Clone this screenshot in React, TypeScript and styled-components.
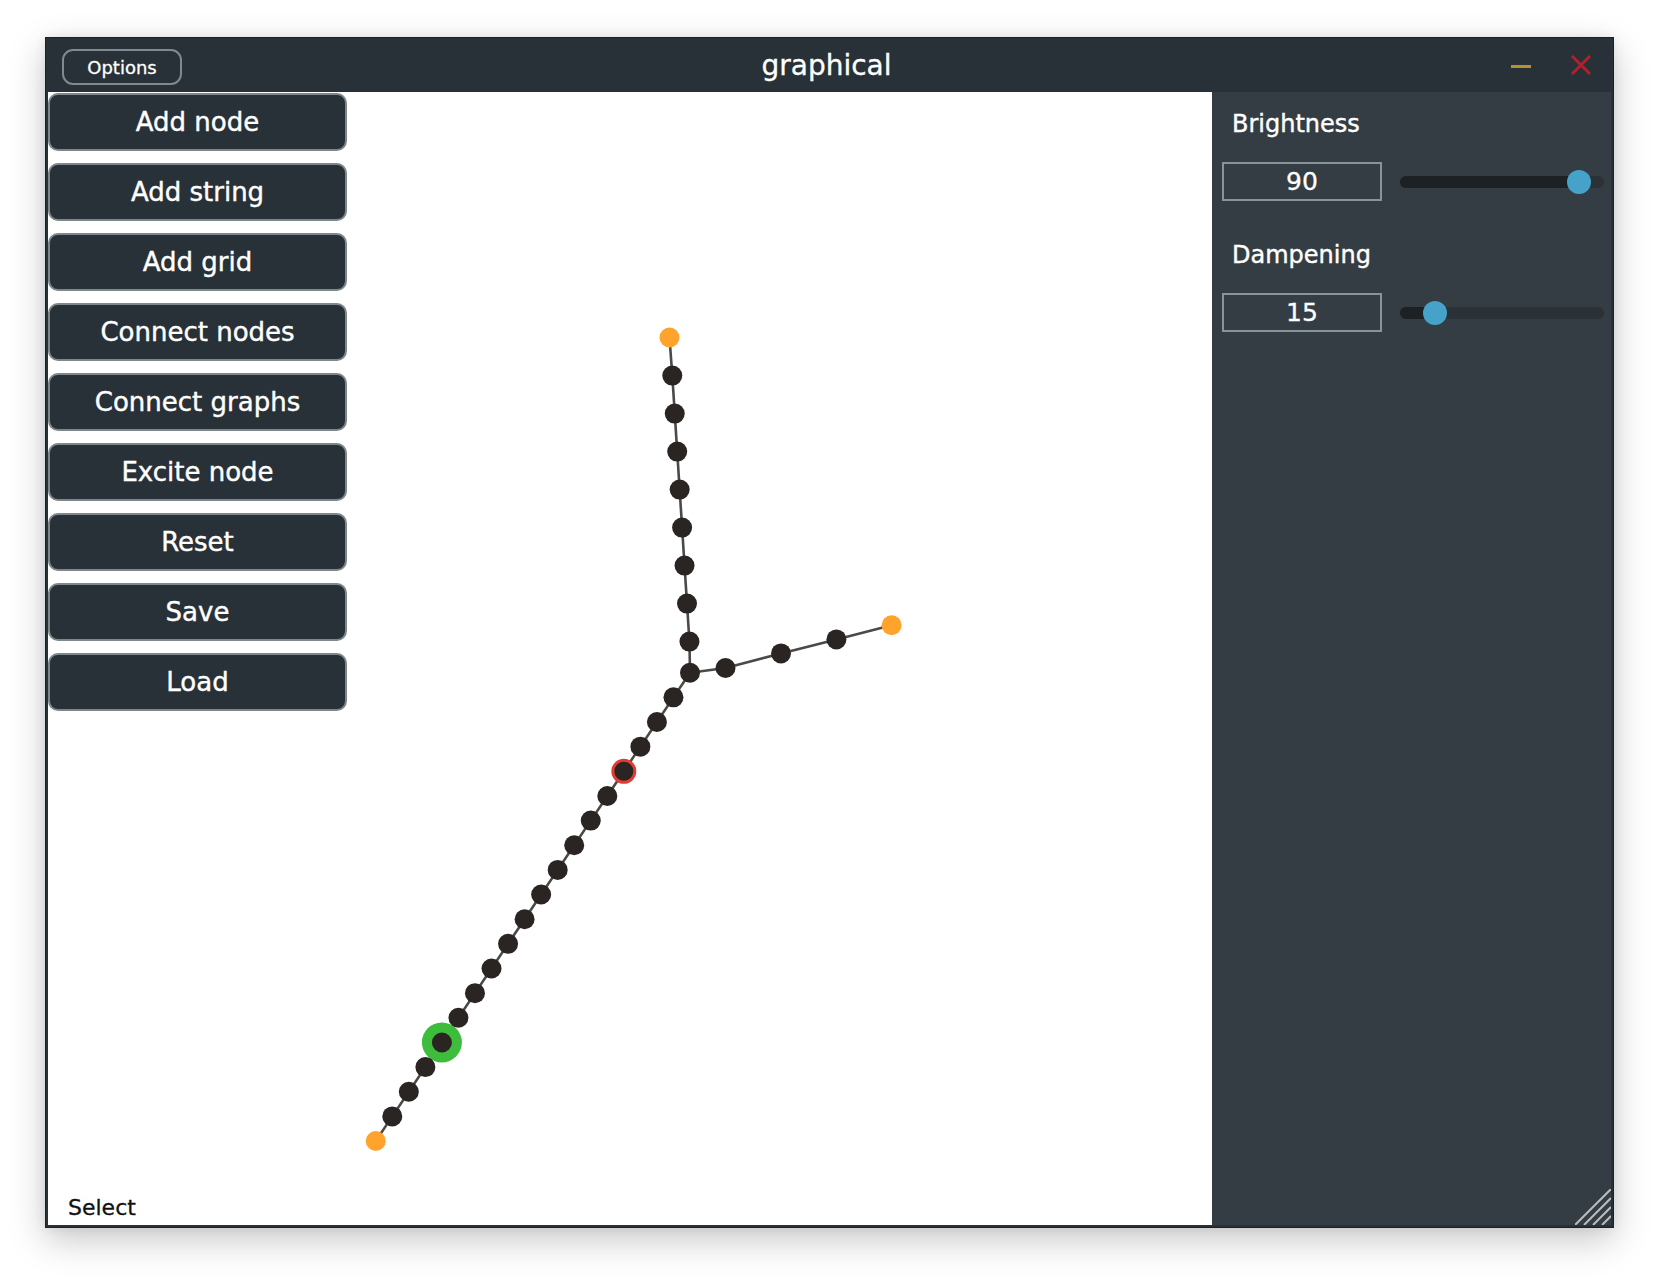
import styled, { createGlobalStyle } from 'styled-components';

const GlobalStyle = createGlobalStyle`
  html, body {
    margin: 0;
    padding: 0;
    background: #ffffff;
    font-family: 'DejaVu Sans', 'Liberation Sans', sans-serif;
  }
`;

const Page = styled.div`
  width: 1660px;
  height: 1282px;
  padding: 37px 0 0 45px;
  box-sizing: border-box;
`;

const Window = styled.div`
  width: 1569px;
  height: 1191px;
  box-sizing: border-box;
  display: flex;
  flex-direction: column;
  background: #283137;
  border: 1px solid #1b2125;
  padding: 0 2px 2px 2px;
  box-shadow: 0 12px 34px rgba(0, 0, 0, 0.22), 0 0 10px rgba(0, 0, 0, 0.08);
`;

const TitleBar = styled.div`
  height: 54px;
  flex: none;
  display: grid;
  grid-template-columns: 1fr auto 1fr;
  align-items: center;
  padding: 0 20px 0 14px;
`;

const OptionsButton = styled.button`
  justify-self: start;
  width: 120px;
  height: 36px;
  margin-top: 4px;
  border: 2px solid #7f898e;
  border-radius: 11px;
  background: transparent;
  color: #ffffff;
  font-family: inherit;
  font-size: 18px;
  padding: 0;
  -webkit-text-stroke: 0.3px #ffffff;
`;

const Title = styled.div`
  color: #ffffff;
  font-size: 28px;
  -webkit-text-stroke: 0.3px #ffffff;
`;

const Controls = styled.div`
  justify-self: end;
  display: flex;
  align-items: center;
  gap: 40px;
`;

const Minimize = styled.div`
  width: 20px;
  height: 3px;
  margin-top: 2px;
  background: #b8912a;
`;

const Body = styled.div`
  flex: 1;
  display: flex;
  min-height: 0;
`;

const Canvas = styled.div`
  position: relative;
  width: 1164px;
  flex: none;
  background: #ffffff;
  display: flex;
  flex-direction: column;
`;

const Drawing = styled.svg`
  position: absolute;
  inset: 0;
`;

const ToolColumn = styled.div`
  position: relative;
  display: flex;
  flex-direction: column;
  gap: 12px;
  padding-top: 1px;
  width: 299px;
`;

const ToolButton = styled.button`
  height: 58px;
  box-sizing: border-box;
  border: 2px solid #7d878c;
  border-radius: 10px;
  background: #283137;
  color: #ffffff;
  font-family: inherit;
  font-size: 26px;
  padding: 0;
  -webkit-text-stroke: 0.4px #ffffff;
`;

const Status = styled.div`
  position: relative;
  margin-top: auto;
  padding: 0 0 4px 20px;
  font-size: 22px;
  line-height: 26px;
  color: #111111;
  -webkit-text-stroke: 0.3px #111111;
`;

const Panel = styled.div`
  position: relative;
  flex: 1;
  background: #343d44;
  padding: 17px 7px 0 10px;
`;

const Label = styled.div`
  color: #ffffff;
  font-size: 24px;
  line-height: 30px;
  padding-left: 10px;
  margin-bottom: 23px;
  -webkit-text-stroke: 0.4px #ffffff;
`;

const Row = styled.div`
  display: flex;
  align-items: center;
  gap: 18px;
  margin-bottom: 39px;
`;

const ValueBox = styled.div`
  width: 160px;
  height: 39px;
  box-sizing: border-box;
  border: 2px solid #89939a;
  color: #ffffff;
  font-size: 25px;
  display: flex;
  align-items: center;
  justify-content: center;
  -webkit-text-stroke: 0.3px #ffffff;
`;

const Track = styled.div`
  position: relative;
  flex: 1;
  height: 12px;
  border-radius: 6px;
  background: #2a3237;
`;

const TrackFill = styled.div`
  height: 100%;
  border-radius: 6px;
  background: #1b2125;
`;

const Thumb = styled.div`
  position: absolute;
  top: 50%;
  width: 24px;
  height: 24px;
  margin: -12px 0 0 -12px;
  border-radius: 50%;
  background: #46a2c9;
`;

const Grip = styled.svg`
  position: absolute;
  right: 0;
  bottom: 0;
`;

const tools = [
  'Add node',
  'Add string',
  'Add grid',
  'Connect nodes',
  'Connect graphs',
  'Excite node',
  'Reset',
  'Save',
  'Load',
];

type Pt = { x: number; y: number };

const junction: Pt = { x: 690, y: 672.7 };
const topEnd: Pt = { x: 669.5, y: 337.5 };
const vertical: Pt[] = Array.from({ length: 8 }, (_, i) => ({ x: 672.3 + i * 2.45, y: 375.6 + i * 38 }));
const right: Pt[] = [
  { x: 725.5, y: 668 },
  { x: 781, y: 653.4 },
  { x: 836.4, y: 639.4 },
];
const rightEnd: Pt = { x: 891.6, y: 625.3 };
const diagonal: Pt[] = Array.from({ length: 18 }, (_, i) => ({
  x: junction.x - 16.54 * (i + 1),
  y: junction.y + 24.65 * (i + 1),
}));
const diagEnd: Pt = { x: junction.x - 16.54 * 19, y: junction.y + 24.65 * 19 };

const poly = (pts: Pt[]) => pts.map((p) => `${p.x},${p.y}`).join(' ');

function Graph() {
  const black = [...vertical, junction, ...right, ...diagonal];
  const red = diagonal[3];
  const green = diagonal[14];
  return (
    <Drawing width={1164} height={1133} viewBox="48 92 1164 1133">
      <g fill="none" stroke="#4a4a4a" strokeWidth={2.6}>
        <polyline points={poly([topEnd, ...vertical, junction])} />
        <polyline points={poly([junction, ...right, rightEnd])} />
        <polyline points={poly([junction, ...diagonal, diagEnd])} />
      </g>
      <circle cx={green.x} cy={green.y} r={20} fill="#3dbd3b" />
      {black.map((p, i) => (
        <circle key={i} cx={p.x} cy={p.y} r={10} fill="#2a2522" />
      ))}
      <circle cx={red.x} cy={red.y} r={11} fill="#2a2522" stroke="#e23b34" strokeWidth={3} />
      {[topEnd, rightEnd, diagEnd].map((p, i) => (
        <circle key={i} cx={p.x} cy={p.y} r={10} fill="#ffa32c" />
      ))}
    </Drawing>
  );
}

function Slider({ label, value, position }: { label: string; value: number; position: number }) {
  return (
    <>
      <Label>{label}</Label>
      <Row>
        <ValueBox>{value}</ValueBox>
        <Track>
          <TrackFill style={{ width: `${position * 100}%` }} />
          <Thumb style={{ left: `${position * 100}%` }} />
        </Track>
      </Row>
    </>
  );
}

export default function App() {
  return (
    <>
      <GlobalStyle />
      <Page>
        <Window>
          <TitleBar>
            <OptionsButton>Options</OptionsButton>
            <Title>graphical</Title>
            <Controls>
              <Minimize />
              <svg width={20} height={20} viewBox="0 0 20 20">
                <path d="M1 1 L19 19 M19 1 L1 19" stroke="#b3202b" strokeWidth={3} />
              </svg>
            </Controls>
          </TitleBar>
          <Body>
            <Canvas>
              <Graph />
              <ToolColumn>
                {tools.map((t) => (
                  <ToolButton key={t}>{t}</ToolButton>
                ))}
              </ToolColumn>
              <Status>Select</Status>
            </Canvas>
            <Panel>
              <Slider label="Brightness" value={90} position={0.877} />
              <Slider label="Dampening" value={15} position={0.172} />
              <Grip width={36} height={36} viewBox="0 0 36 36">
                <g stroke="#b9bfc2" strokeWidth={2}>
                  <path d="M0 36 L36 0" />
                  <path d="M9 36 L36 9" />
                  <path d="M18 36 L36 18" />
                  <path d="M27 36 L36 27" />
                </g>
              </Grip>
            </Panel>
          </Body>
        </Window>
      </Page>
    </>
  );
}
